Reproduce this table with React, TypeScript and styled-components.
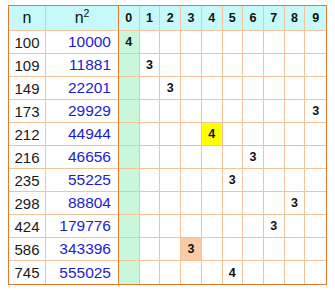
import React from "react";
import styled, { createGlobalStyle } from "styled-components";

const Global = createGlobalStyle`
  html, body { margin: 0; padding: 0; background: #ffffff; }
  body { font-family: "Liberation Sans", Arial, sans-serif; }
`;

const Page = styled.div`
  padding: 5px 0 0 8px;
`;

const Grid = styled.div`
  display: grid;
  grid-template-columns: 37px 73px repeat(10, 1fr);
  grid-template-rows: 25px repeat(11, 1fr);
  width: 319px;
  height: 280px;
  box-sizing: border-box;
  border: 1.5px solid #e57a2c;
`;

type CellProps = {
  $bg?: string;
  $strong?: boolean;
  $lastRow?: boolean;
  $lastCol?: boolean;
};

const Cell = styled.div<CellProps>`
  display: flex;
  align-items: center;
  justify-content: center;
  background: ${(p) => p.$bg || "transparent"};
  border-right: ${(p) => (p.$lastCol ? "none" : p.$strong ? "1px solid #e57a2c" : "1px solid #f4c39c")};
  border-bottom: ${(p) => (p.$lastRow ? "none" : "1px solid #f4c39c")};
  box-sizing: border-box;
  min-width: 0;
`;

const HeadText = styled.span`
  font-size: 16px;
  color: #111;
  sup {
    font-size: 10.5px;
    vertical-align: 0;
    position: relative;
    top: -6px;
  }
`;

const HeadDigit = styled.span`
  font-size: 12.5px;
  font-weight: bold;
  color: #111;
`;

const NText = styled.span`
  font-size: 15px;
  color: #1a1a1a;
`;

const SqCell = styled(Cell)`
  justify-content: flex-end;
  padding-right: 7px;
`;

const SqText = styled.span`
  font-size: 15.5px;
  color: #1c1cd6;
`;

const Count = styled.span`
  font-size: 12.5px;
  font-weight: bold;
  color: #111;
`;

const HEAD_BG = "#c6fafa";
const GREEN = "#c8f7dc";

type Row = { n: number; sq: number; col: number; count: number; bg?: string };

const rows: Row[] = [
  { n: 100, sq: 10000, col: 0, count: 4 },
  { n: 109, sq: 11881, col: 1, count: 3 },
  { n: 149, sq: 22201, col: 2, count: 3 },
  { n: 173, sq: 29929, col: 9, count: 3 },
  { n: 212, sq: 44944, col: 4, count: 4, bg: "#ffff00" },
  { n: 216, sq: 46656, col: 6, count: 3 },
  { n: 235, sq: 55225, col: 5, count: 3 },
  { n: 298, sq: 88804, col: 8, count: 3 },
  { n: 424, sq: 179776, col: 7, count: 3 },
  { n: 586, sq: 343396, col: 3, count: 3, bg: "#f9cba6" },
  { n: 745, sq: 555025, col: 5, count: 4 },
];

const digits = [0, 1, 2, 3, 4, 5, 6, 7, 8, 9];

export default function App() {
  return (
    <>
      <Global />
      <Page>
        <Grid>
          <Cell $bg={HEAD_BG}>
            <HeadText>n</HeadText>
          </Cell>
          <Cell $bg={HEAD_BG} $strong>
            <HeadText>
              n<sup>2</sup>
            </HeadText>
          </Cell>
          {digits.map((d) => (
            <Cell key={d} $bg={HEAD_BG} $lastCol={d === 9}>
              <HeadDigit>{d}</HeadDigit>
            </Cell>
          ))}
          {rows.map((r, i) => {
            const last = i === rows.length - 1;
            return (
              <React.Fragment key={r.n}>
                <Cell $lastRow={last}>
                  <NText>{r.n}</NText>
                </Cell>
                <SqCell $lastRow={last} $strong>
                  <SqText>{r.sq}</SqText>
                </SqCell>
                {digits.map((d) => {
                  const hit = d === r.col;
                  const bg = hit && r.bg ? r.bg : d === 0 ? GREEN : undefined;
                  return (
                    <Cell key={d} $bg={bg} $lastRow={last} $lastCol={d === 9}>
                      {hit ? <Count>{r.count}</Count> : null}
                    </Cell>
                  );
                })}
              </React.Fragment>
            );
          })}
        </Grid>
      </Page>
    </>
  );
}
